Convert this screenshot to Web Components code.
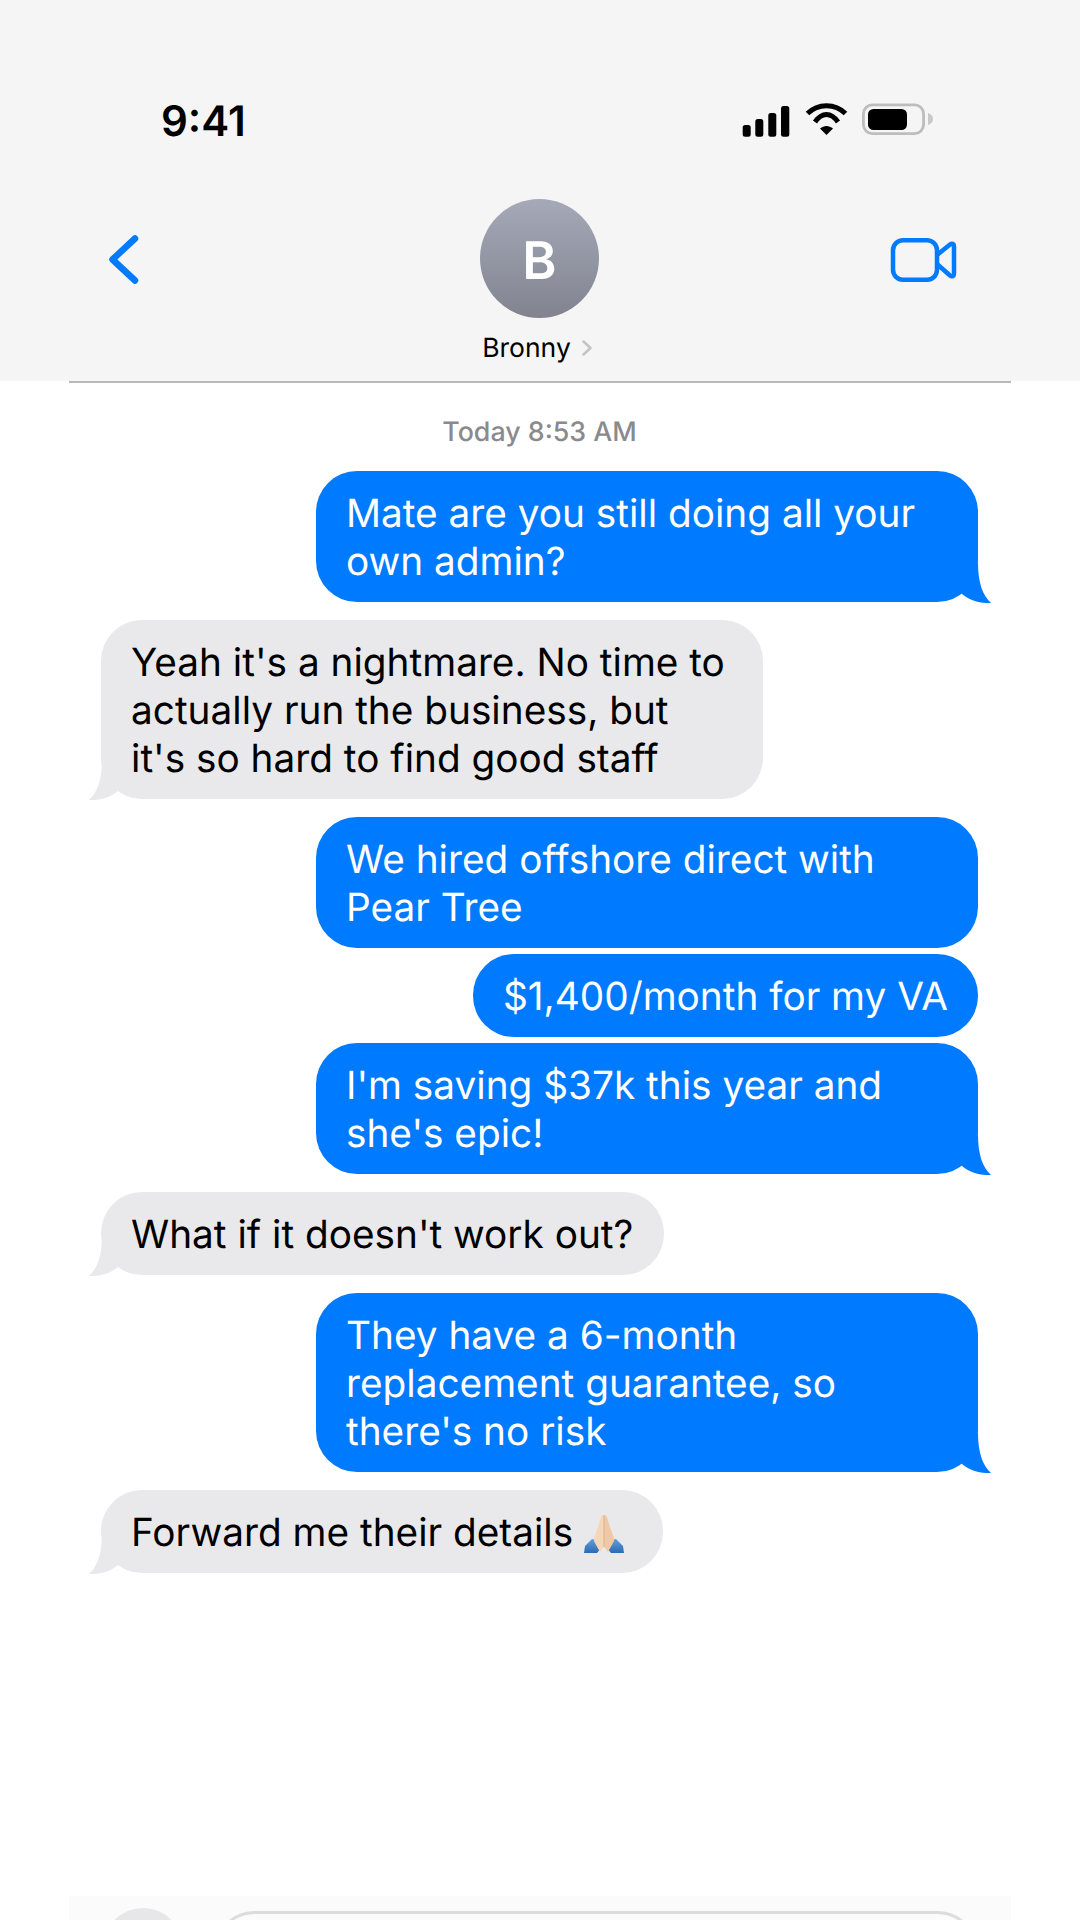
<!DOCTYPE html>
<html><head><meta charset="utf-8"><title>Messages</title>
<style>
html,body{margin:0;padding:0;background:#fff;}
body{width:1080px;height:1920px;overflow:hidden;font-family:Inter,"Liberation Sans",sans-serif;display:flex;flex-direction:column;text-rendering:geometricPrecision;}
.top{background:#f5f5f5}
</style></head><body>
<template id="t-status"><style>
:host{display:flex;justify-content:space-between;align-items:center;padding:62px 144px 0 161px;box-sizing:border-box;height:180px;}
.t{font:600 42px/50px Inter,sans-serif;color:#000;margin-top:2px}
svg{display:block}
</style><span class="t">9:41</span><svg width="196" height="40" viewBox="0 0 196 40">
<g fill="#000"><rect x="2.700" y="24" width="8" height="11.700" rx="2.500"/><rect x="15.300" y="18" width="8" height="17.700" rx="2.500"/><rect x="28.300" y="12" width="8" height="23.700" rx="2.500"/><rect x="41" y="5" width="8.300" height="30.700" rx="2.500"/></g>
<g fill="none" stroke="#000" stroke-width="5"><path d="M67.500 12.500C78 2 95 2 105.500 12.500"/><path d="M75 21C82 11 91 11 98 21"/></g><path d="M80 27.500C84 24 89 24 93 27.500L86.500 34Z" fill="#000"/>
<rect x="123.400" y="3.900" width="60.200" height="28.700" rx="9" fill="none" stroke="#bdbdbd" stroke-width="2.800"/><rect x="128" y="8" width="39" height="21" rx="5.500" fill="#000"/><path d="M188 12C191 13 193 15 193 18C193 21 191 23 188 24Z" fill="#c8c8c8"/></svg></template>

<template id="t-nav"><style>
:host{display:block;height:201px;position:relative;background:#f5f5f5;}
.row{display:grid;grid-template-columns:1fr auto 1fr;align-items:start;height:201px;padding:0 123px 0 108px;box-sizing:border-box;}
.back{margin-top:52px;justify-self:start}
.vid{margin-top:56px;justify-self:end}
.c{display:flex;flex-direction:column;align-items:center;padding-top:19px;margin-left:14px}
.av{width:119px;height:119px;border-radius:50%;background:linear-gradient(#a5a9b8,#81848f);color:#fff;font:600 52px/123px Inter,sans-serif;text-align:center;}
.n{display:flex;align-items:center;gap:11px;margin-top:14px;margin-left:-5px;font:400 26.500px/32px Inter,sans-serif;color:#000;}
svg{display:block}
.line{position:absolute;left:69px;right:69px;bottom:-2px;height:2px;background:#b9b9b9}
</style><div class="row"><svg class="back" width="32" height="54" viewBox="0 0 32 54"><path d="M27 6.500L4.500 27.500L27 48.500" fill="none" stroke="#007aff" stroke-width="6.500" stroke-linecap="round" stroke-linejoin="round"/></svg>
<div class="c"><div class="av">B</div><div class="n"><span>Bronny</span><svg width="10" height="16" viewBox="0 0 10 16"><path d="M1.500 1.500L8.500 8L1.500 14.500" fill="none" stroke="#c4c4c6" stroke-width="2.500" stroke-linecap="round" stroke-linejoin="round"/></svg></div></div>
<svg class="vid" width="68" height="46" viewBox="0 0 68 46"><rect x="4" y="4.250" width="44" height="39.500" rx="10" fill="none" stroke="#007aff" stroke-width="4.500"/><path d="M48 19L61 8.500C63 7 65 8 65 10V38C65 40 63 41 61 39.500L48 28" fill="none" stroke="#007aff" stroke-width="4.500" stroke-linejoin="round"/></svg></div><div class="line"></div></template>

<template id="t-thread"><style>
:host{display:flex;flex-direction:column;flex:1;padding:35px 102px 0 101px;box-sizing:border-box;}
.ts{text-align:center;font:500 26.800px/32px Inter,sans-serif;color:#8a8a8e;margin-bottom:23px;}
</style><div class="ts">Today 8:53 AM</div><slot></slot></template>

<template id="t-bubble"><style>
:host{display:block;position:relative;box-sizing:border-box;width:fit-content;padding:19px 30px 16px 30px;border-radius:41px;font:400 38.750px/48px Inter,sans-serif;margin-top:6px;white-space:pre;}
:host([from=me]){background:#007aff;color:#fff;align-self:flex-end;}
:host([from=them]){background:#e9e9eb;color:#000;align-self:flex-start;padding-right:31px}
:host([wide]){width:662px}
:host([group]){margin-top:18px}
:host([first]){margin-top:0}
svg{display:none;position:absolute;bottom:-1px;width:60px;height:40px}
:host([tail]) svg{display:block}
:host([from=me]) svg{right:-13px;fill:#007aff}
:host([from=them]) svg{left:-12px;fill:#e9e9eb;transform:scaleX(-1)}
</style><slot></slot><svg viewBox="0 0 60 40"><path d="M47 0C47 20 52 33 60 40C50 40.500 39 38 31 31L20 20Z"/></svg></template>

<template id="t-pray"><style>
:host{display:inline-block;width:40px;height:39px;vertical-align:-7px;margin-right:8px}
svg{display:block}
</style><svg width="40" height="39" viewBox="0 0 40 39"><defs><linearGradient id="b" x1="0" y1="0" x2="0" y2="1"><stop offset="0" stop-color="#5f9fdc"/><stop offset="1" stop-color="#2c6bb2"/></linearGradient></defs>
<path d="M0 39L1 32L8 25L12 26L17 34L13 39Z" fill="url(#b)"/><path d="M40 39L39 32L32 25L28 26L23 34L27 39Z" fill="url(#b)"/>
<path d="M19.500 1C17.500 1 16.500 4 15 10C13 17 9 24 10 27C12 31 15 36 16 38L19.500 33Z" fill="#f6d6b8"/><path d="M20.500 1C22.500 1 23.500 4 25 10C27 17 31 24 30 27C28 31 25 36 24 38L20.500 33Z" fill="#f1c8a4"/><path d="M20 1V33" stroke="#d9a67e" stroke-width="1"/></svg></template>

<template id="t-compose"><style>
:host{display:block;position:relative;height:24px;margin:0 69px;background:#fbfbfb;overflow:hidden}
.p{position:absolute;left:34px;top:12px;width:80px;height:80px;border-radius:50%;background:#e7e7ea}
.f{position:absolute;left:144px;right:32px;top:15px;height:90px;border:3px solid #dcdcdc;border-radius:42px;box-sizing:border-box}
</style><div class="p"></div><div class="f"></div></template>

<script>
function def(tag,tid){customElements.define(tag,class extends HTMLElement{constructor(){super();this.attachShadow({mode:'open'}).appendChild(document.getElementById(tid).content.cloneNode(true));}});}
def('ios-status','t-status');def('ios-nav','t-nav');def('ios-thread','t-thread');def('ios-bubble','t-bubble');def('ios-pray','t-pray');def('ios-compose','t-compose');
</script>
<div class="top"><ios-status></ios-status><ios-nav></ios-nav></div>
<ios-thread>
<ios-bubble from="me" tail wide first>Mate are you still doing all your
own admin?</ios-bubble>
<ios-bubble from="them" tail group wide>Yeah it's a nightmare. No time to
actually run the business, but
it's so hard to find good staff</ios-bubble>
<ios-bubble from="me" group wide>We hired offshore direct with
Pear Tree</ios-bubble>
<ios-bubble from="me">$1,400/month for my VA</ios-bubble>
<ios-bubble from="me" tail wide>I'm saving $37k this year and
she's epic!</ios-bubble>
<ios-bubble from="them" tail group>What if it doesn't work out?</ios-bubble>
<ios-bubble from="me" tail group wide>They have a 6-month
replacement guarantee, so
there's no risk</ios-bubble>
<ios-bubble from="them" tail group>Forward me their details <ios-pray></ios-pray></ios-bubble>
</ios-thread>
<ios-compose></ios-compose>
</body></html>
